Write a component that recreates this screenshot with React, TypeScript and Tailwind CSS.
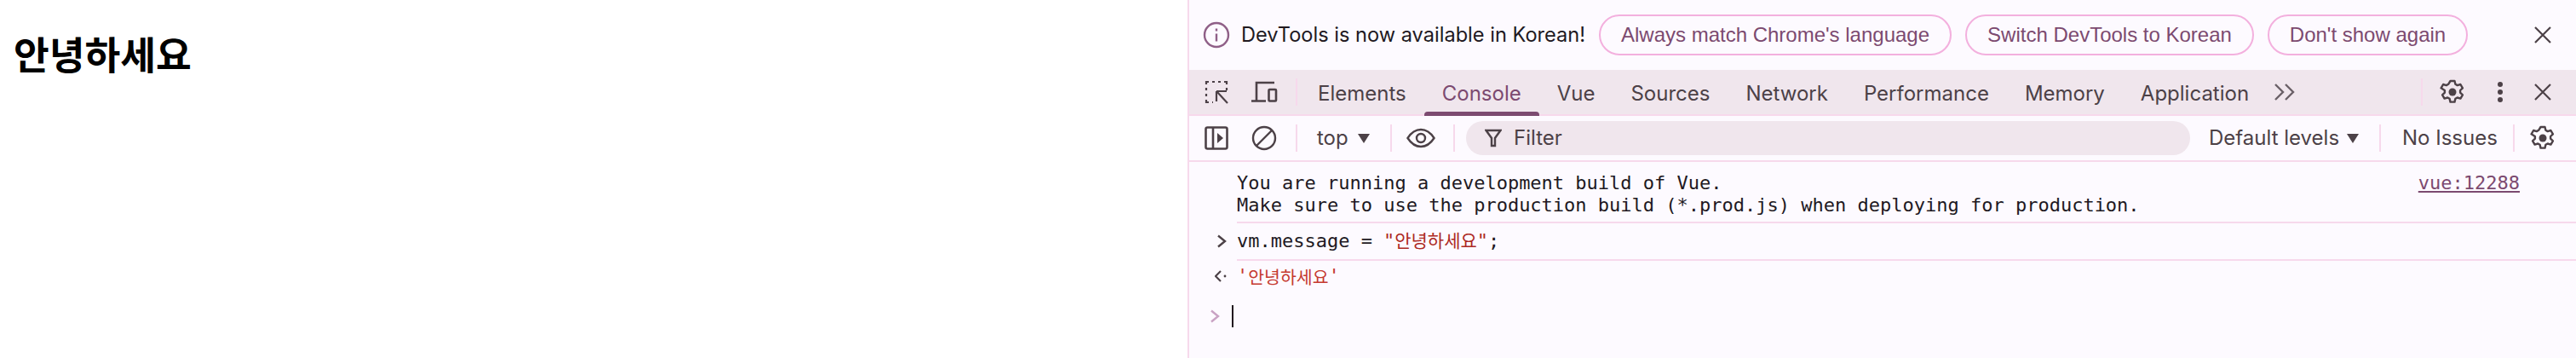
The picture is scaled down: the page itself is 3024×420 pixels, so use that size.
import React from 'react';

function Divider({ className = '' }: { className?: string }) {
  return <div className={`h-8 w-[2px] shrink-0 bg-[#f7d9ec] ${className}`} />;
}

function Gear() {
  return (
    <svg viewBox="0 0 30 30" className="h-[30px] w-[30px]" fill="none" stroke="#4c4147" strokeWidth="2.4" strokeLinejoin="round">
      <path d="M12.5 2h5l.9 3.8 2.3 1.3 3.7-1.1 2.5 4.3-2.8 2.7v2.6l2.8 2.7-2.5 4.3-3.7-1.1-2.3 1.3-.9 3.8h-5l-.9-3.8-2.3-1.3-3.7 1.1-2.5-4.3 2.8-2.7v-2.6L1.6 10.3 4.1 6l3.7 1.1 2.3-1.3z" />
      <circle cx="15" cy="15" r="4.5" fill="#4c4147" stroke="none" />
    </svg>
  );
}

function Close() {
  return (
    <svg viewBox="0 0 20 20" className="h-5 w-5" stroke="#4c4147" strokeWidth="2.2">
      <path d="M1 1l18 18M19 1L1 19" />
    </svg>
  );
}

function Caret() {
  return (
    <svg viewBox="0 0 14 11" className="h-[11px] w-[14px]" fill="#4c4147">
      <path d="M0 0h14L7 11z" />
    </svg>
  );
}

function InfoButton({ label, width }: { label: string; width: string }) {
  return (
    <button className={`flex h-12 items-center justify-center rounded-full border-2 border-[#f3b0de] font-['Liberation_Sans',sans-serif] text-[24px] text-[#7c4a70] ${width}`}>
      {label}
    </button>
  );
}

const tabs = ['Elements', 'Console', 'Vue', 'Sources', 'Network', 'Performance', 'Memory', 'Application'];

export default function App() {
  return (
    <div className="flex h-[420px] w-[3024px] overflow-hidden bg-white">
      <main className="w-[1394px] shrink-0 pl-4 pt-[32px]">
        <h1 className="font-['Noto_Sans_CJK_KR',sans-serif] text-[45.4px] font-bold leading-[60px] text-black">안녕하세요</h1>
      </main>

      <section className="flex min-w-0 flex-1 flex-col border-l-2 border-[#f7d9ec] bg-[#fdfaff] font-['Inter','Liberation_Sans',sans-serif] text-[24px]">
        {/* language infobar */}
        <div className="flex h-[82px] shrink-0 items-center pl-4">
          <svg viewBox="0 0 32 32" className="h-8 w-8" fill="none" stroke="#8f5f87" strokeWidth="2.4">
            <circle cx="16" cy="16" r="14" />
            <path d="M16 14.5v9M16 8.5v3" />
          </svg>
          <span className="ml-[13px] w-[420px] whitespace-nowrap text-[23.6px] text-[#21191f]">DevTools is now available in Korean!</span>
          <div className="flex gap-4">
            <InfoButton label="Always match Chrome's language" width="w-[414px]" />
            <InfoButton label="Switch DevTools to Korean" width="w-[339px]" />
            <InfoButton label="Don't show again" width="w-[235px]" />
          </div>
          <div className="ml-[78px]">
            <Close />
          </div>
        </div>

        {/* main tabs */}
        <div className="flex h-[54px] shrink-0 items-center border-b-2 border-[#f7d9ec] bg-[#f0e6ed] pl-[18px] text-[#4c4147]">
          <svg viewBox="0 0 28 28" className="h-7 w-7" fill="none" stroke="#4c4147" strokeWidth="2.2">
            <path d="M2 5V2h3M9 2h3M16 2h3M23 2h3v3M26 9v3M2 9v3M2 16v3M2 23v3h3M9 26h1" />
            <path d="M14 13h12M14 13v12M15 14l12 13" />
          </svg>
          <svg viewBox="0 0 32 26" className="ml-[26px] h-[26px] w-8" fill="none" stroke="#4c4147" strokeWidth="2.6">
            <path d="M28 2H7v21M1 23.5h17" />
            <rect x="21.5" y="10" width="8.5" height="13.5" rx="1" />
          </svg>
          <Divider className="ml-[21px] mr-[3px]" />
          <div className="flex h-full">
            {tabs.map((tab) => (
              <div key={tab} className={`relative flex h-full items-center whitespace-nowrap px-[21px] pt-[4px] ${tab === 'Console' ? 'text-[#7c4a70]' : ''}`}>
                {tab}
                {tab === 'Console' && <div className="absolute inset-x-0 bottom-[-2px] h-[5px] rounded-t bg-[#7c4a70]" />}
              </div>
            ))}
          </div>
          <svg viewBox="0 0 24 20" className="ml-[9px] h-5 w-6" fill="none" stroke="#6a6067" strokeWidth="2.4">
            <path d="M1 1l9 9-9 9M13 1l9 9-9 9" />
          </svg>
          <Divider className="ml-auto mr-5" />
          <Gear />
          <svg viewBox="0 0 8 30" className="ml-[37px] h-[30px] w-2" fill="#4c4147">
            <circle cx="4" cy="6" r="3" />
            <circle cx="4" cy="15" r="3" />
            <circle cx="4" cy="24" r="3" />
          </svg>
          <div className="ml-9 mr-[29px]">
            <Close />
          </div>
        </div>

        {/* console toolbar */}
        <div className="flex h-[54px] shrink-0 items-center border-b-2 border-[#f7d9ec] pl-[18px] text-[#4c4147]">
          <svg viewBox="0 0 28 28" className="h-7 w-7" fill="none" stroke="#4c4147" strokeWidth="2.6">
            <rect x="1.5" y="1.5" width="25" height="25" rx="2" />
            <path d="M10 1.5v25" />
            <path d="M15 8l7 6-7 6z" fill="#4c4147" stroke="none" />
          </svg>
          <svg viewBox="0 0 30 30" className="ml-[27px] h-[30px] w-[30px]" fill="none" stroke="#4c4147" strokeWidth="2.4">
            <circle cx="15" cy="15" r="13" />
            <path d="M6 24L24 6" />
          </svg>
          <Divider className="ml-[22px]" />
          <span className="ml-[23px] w-9">top</span>
          <div className="ml-3">
            <Caret />
          </div>
          <Divider className="ml-6" />
          <svg viewBox="0 0 34 24" className="ml-[17px] h-6 w-[34px]" fill="none" stroke="#4c4147" strokeWidth="2.4">
            <path d="M1.5 12C6 5 11 2 17 2s11 3 15.5 10C28 19 23 22 17 22S6 19 1.5 12z" />
            <circle cx="17" cy="12" r="5" />
          </svg>
          <Divider className="ml-[21px]" />
          <div className="ml-[13px] flex h-10 w-[850px] items-center rounded-full bg-[#f0e6ed] pl-[22px]">
            <svg viewBox="0 0 20 22" className="h-[22px] w-5" fill="none" stroke="#4c4147" strokeWidth="2.4">
              <path d="M1.5 2h17L12 11v9H8v-9z" />
            </svg>
            <span className="ml-[14px]">Filter</span>
          </div>
          <span className="ml-[22px] w-[151px] whitespace-nowrap">Default levels</span>
          <div className="ml-[11px]">
            <Caret />
          </div>
          <Divider className="ml-6" />
          <span className="ml-[25px] w-[108px] whitespace-nowrap">No Issues</span>
          <Divider className="ml-[22px]" />
          <div className="ml-[18px]">
            <Gear />
          </div>
        </div>

        {/* console output */}
        <div className="flex flex-1 flex-col font-['DejaVu_Sans_Mono',monospace] text-[22px] leading-[26px] text-[#21191f]">
          <div className="ml-14 flex justify-between border-b-2 border-[#f7d9ec] pb-[6px] pr-[66px] pt-[12px]">
            <div>
              You are running a development build of Vue.
              <br />
              Make sure to use the production build (*.prod.js) when deploying for production.
            </div>
            <span className="text-[#7c4a70] underline">vue:12288</span>
          </div>
          <div className="ml-14 flex h-[44px] items-center border-b-2 border-[#f7d9ec]">
            <svg viewBox="0 0 12 16" className="-ml-6 mr-3 h-4 w-3" fill="none" stroke="#4c4147" strokeWidth="2.4">
              <path d="M2 1.5l8 6.5-8 6.5" />
            </svg>
            vm.message = <span className="ml-[13px] font-['DejaVu_Sans_Mono','Noto_Sans_CJK_KR',monospace] text-[#ad2a24]">"<span className="text-[21px]">안녕하세요</span>"</span>;
          </div>
          <div className="ml-14 flex h-[36px] items-center text-[#c5392f]">
            <svg viewBox="0 0 14 14" className="-ml-[26px] mr-3 h-[14px] w-[14px]" fill="none" stroke="#4c4147" strokeWidth="2.2">
              <path d="M7 1L1 7l6 6" />
              <circle cx="12" cy="7" r="1.4" fill="#4c4147" stroke="none" />
            </svg>
            '<span className="font-['Noto_Sans_CJK_KR',sans-serif] text-[20.5px]">안녕하세요</span>'
          </div>
          <div className="flex items-center pl-6 pt-4">
            <svg viewBox="0 0 12 16" className="h-4 w-3" fill="none" stroke="#c9a2c4" strokeWidth="2.4">
              <path d="M2 1.5l8 6.5-8 6.5" />
            </svg>
            <div className="ml-[14px] h-[26px] w-[2px] bg-[#21191f]" />
          </div>
        </div>
      </section>
    </div>
  );
}
